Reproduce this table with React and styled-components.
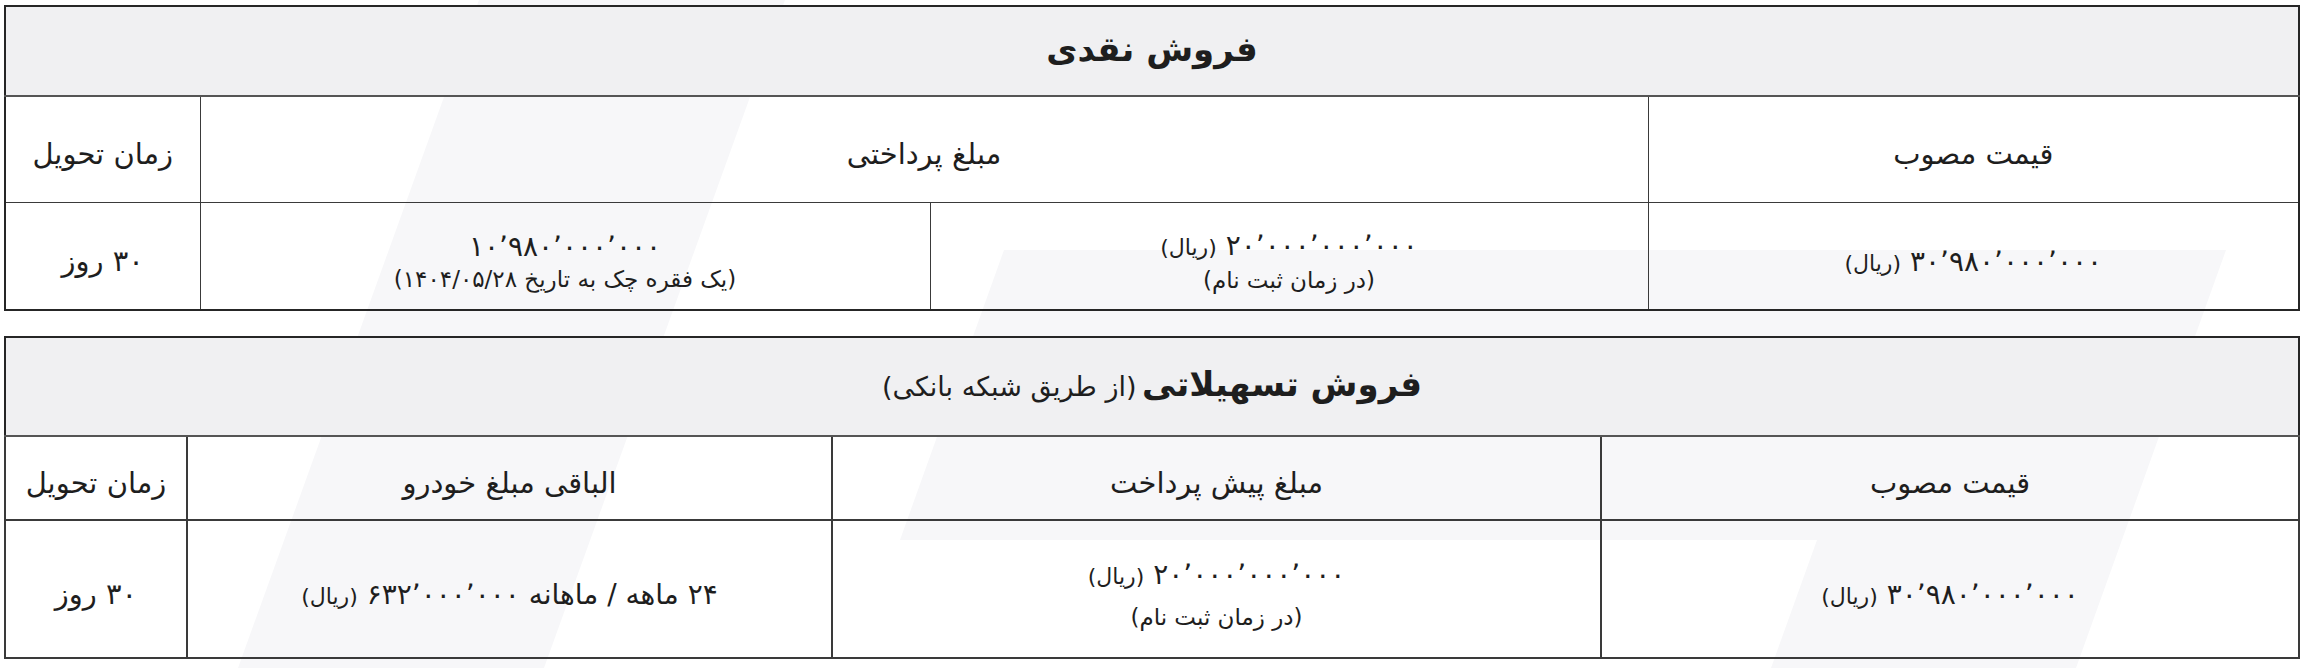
import React from 'react';
import styled, { createGlobalStyle } from 'styled-components';

const GlobalStyle = createGlobalStyle`
  html, body {
    margin: 0;
    padding: 0;
    background: #fff;
  }
  body {
    font-family: "DejaVu Sans", "Noto Sans", sans-serif;
    color: #1e1e1e;
  }
`;

const Page = styled.div`
  position: relative;
  width: 2303px;
  height: 668px;
  box-sizing: border-box;
  padding: 5px 3px 0 6px;
  display: flex;
  flex-direction: column;
  gap: 25px;
  direction: rtl;
  overflow: hidden;
`;

const Watermark = styled.svg`
  position: absolute;
  top: 0;
  left: 0;
  z-index: 0;
`;

const SaleTable = styled.table`
  position: relative;
  z-index: 1;
  width: 100%;
  table-layout: fixed;
  border-collapse: collapse;
  border: 2px solid #262626;
`;

const Row = styled.tr`
  height: ${p => p.$h}px;
`;

const TitleCell = styled.th`
  background: #f0f0f2;
  border-bottom: 2px solid #555;
  font-weight: 700;
  text-align: center;
  vertical-align: middle;
  padding: 0 0 5px;
`;

const Title = styled.span`
  font-size: 34px;
  font-weight: 700;
`;

const Subtitle = styled.span`
  font-size: 27px;
  font-weight: 400;
`;

const Cell = styled.td`
  border: ${p => (p.$thick ? 2 : 1)}px solid #3a3a3a;
  text-align: center;
  vertical-align: middle;
  padding: ${p => (p.$head ? 10 : 14)}px 0 0;
  font-size: ${p => (p.$head ? 29 : 28)}px;
  line-height: ${p => p.$lh || 32}px;
`;

const Line = styled.div`
  white-space: nowrap;
`;

const Unit = styled.span`
  font-size: 22px;
`;

const Note = styled.div`
  font-size: 23px;
  white-space: nowrap;
`;

function Amount({ value }) {
  return (
    <Line>
      {value} <Unit>(ریال)</Unit>
    </Line>
  );
}

function Cols({ widths }) {
  return (
    <colgroup>
      {widths.map((w, i) => (
        <col key={i} style={{ width: w }} />
      ))}
    </colgroup>
  );
}

export default function App() {
  return (
    <>
      <GlobalStyle />
      <Page>
        <Watermark width="2303" height="668" viewBox="0 0 2303 668">
          <polygon points="479,0 785,0 544,668 238,668" fill="#f7f7f9" />
          <polygon
            points="1004,250 2226,250 2076,668 1771,668 1817,540 900,540"
            fill="#f7f7f9"
          />
        </Watermark>

        <SaleTable>
          <Cols widths={[651, 718, 730, 195]} />
          <tbody>
            <Row $h={90}>
              <TitleCell colSpan={4}>
                <Title>فروش نقدی</Title>
              </TitleCell>
            </Row>
            <Row $h={106}>
              <Cell $head>قیمت مصوب</Cell>
              <Cell $head colSpan={2}>مبلغ پرداختی</Cell>
              <Cell $head>زمان تحویل</Cell>
            </Row>
            <Row $h={108}>
              <Cell>
                <Amount value="۳۰٬۹۸۰٬۰۰۰٬۰۰۰" />
              </Cell>
              <Cell>
                <Amount value="۲۰٬۰۰۰٬۰۰۰٬۰۰۰" />
                <Note>(در زمان ثبت نام)</Note>
              </Cell>
              <Cell>
                <Line>۱۰٬۹۸۰٬۰۰۰٬۰۰۰</Line>
                <Note>(یک فقره چک به تاریخ ۱۴۰۴/۰۵/۲۸)</Note>
              </Cell>
              <Cell $head>۳۰ روز</Cell>
            </Row>
          </tbody>
        </SaleTable>

        <SaleTable>
          <Cols widths={[698, 769, 645, 182]} />
          <tbody>
            <Row $h={99}>
              <TitleCell colSpan={4}>
                <Title>فروش تسهیلاتی</Title> <Subtitle>(از طریق شبکه بانکی)</Subtitle>
              </TitleCell>
            </Row>
            <Row $h={84}>
              <Cell $head $thick>قیمت مصوب</Cell>
              <Cell $head $thick>مبلغ پیش پرداخت</Cell>
              <Cell $head $thick>الباقی مبلغ خودرو</Cell>
              <Cell $head $thick>زمان تحویل</Cell>
            </Row>
            <Row $h={138}>
              <Cell $thick>
                <Amount value="۳۰٬۹۸۰٬۰۰۰٬۰۰۰" />
              </Cell>
              <Cell $thick $lh={41}>
                <Amount value="۲۰٬۰۰۰٬۰۰۰٬۰۰۰" />
                <Note>(در زمان ثبت نام)</Note>
              </Cell>
              <Cell $thick>
                <Line>
                  ۲۴ ماهه / ماهانه ۶۳۲٬۰۰۰٬۰۰۰ <Unit>(ریال)</Unit>
                </Line>
              </Cell>
              <Cell $head $thick>۳۰ روز</Cell>
            </Row>
          </tbody>
        </SaleTable>
      </Page>
    </>
  );
}
